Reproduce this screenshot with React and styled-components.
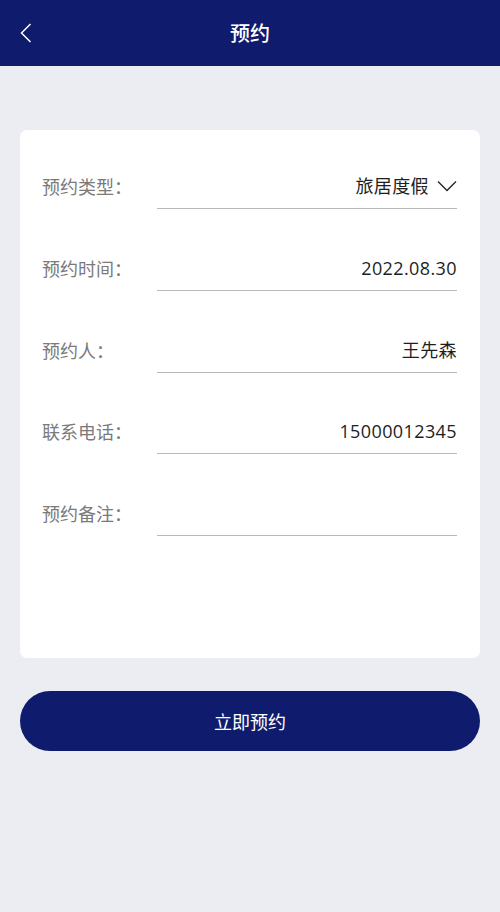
import React from 'react'
import styled, { createGlobalStyle } from 'styled-components'

const GlobalStyle = createGlobalStyle`
  html, body {
    margin: 0;
    padding: 0;
    background: #ecedf2;
    font-family: "Noto Sans CJK SC", "Noto Sans", sans-serif;
  }
`

const Page = styled.div`
  min-height: 912px;
  background: #ecedf2;
`

const Header = styled.header`
  height: 66px;
  background: #0f1c6e;
  display: flex;
  align-items: center;
  justify-content: center;
  position: relative;
  color: #fff;
`

const BackButton = styled.button`
  position: absolute;
  left: 14px;
  top: 18px;
  width: 24px;
  height: 30px;
  padding: 0;
  border: none;
  background: none;
  display: flex;
  align-items: center;
  justify-content: center;
  cursor: pointer;
`

const Title = styled.h1`
  margin: 0;
  font-size: 20px;
  font-weight: 500;
  line-height: 28px;
`

const Content = styled.main`
  padding: 64px 20px 0;
  display: flex;
  flex-direction: column;
  gap: 33px;
`

const Card = styled.section`
  background: #fff;
  border-radius: 7px;
  padding: 44px 23px 122px 22px;
  display: flex;
  flex-direction: column;
  gap: 46.75px;
`

const Row = styled.div`
  display: flex;
  align-items: flex-end;
`

const Label = styled.span`
  width: 115px;
  flex-shrink: 0;
  font-size: 18px;
  line-height: 24px;
  color: #7a7a7a;
  padding-bottom: 11px;
`

const Field = styled.div`
  flex: 1;
  display: flex;
  align-items: center;
  justify-content: flex-end;
  gap: 8px;
  height: 24px;
  padding-bottom: 10px;
  border-bottom: 1px solid #b8b8b8;
  font-family: "Open Sans", "Noto Sans CJK SC", sans-serif;
  font-size: 18px;
  letter-spacing: 0.4px;
  line-height: 24px;
  color: #1e1e1e;
`

const SubmitButton = styled.button`
  height: 60px;
  border: none;
  border-radius: 30px;
  background: #0f1c6e;
  color: #fff;
  font-family: inherit;
  font-size: 18px;
  cursor: pointer;
`

const ChevronDown = () => (
  <svg width="20" height="12" viewBox="0 0 20 12" fill="none">
    <path d="M1 1.5 L10 10.5 L19 1.5" stroke="#222" strokeWidth="1.3" />
  </svg>
)

const ChevronLeft = () => (
  <svg width="12" height="20" viewBox="0 0 12 20" fill="none">
    <path d="M10.5 1 L1.5 10 L10.5 19" stroke="#fff" strokeWidth="1.5" />
  </svg>
)

const fields = [
  { label: '预约类型：', value: '旅居度假', select: true },
  { label: '预约时间：', value: '2022.08.30' },
  { label: '预约人：', value: '王先森' },
  { label: '联系电话：', value: '15000012345' },
  { label: '预约备注：', value: '' },
]

export default function App() {
  return (
    <Page>
      <GlobalStyle />
      <Header>
        <BackButton aria-label="返回">
          <ChevronLeft />
        </BackButton>
        <Title>预约</Title>
      </Header>
      <Content>
        <Card>
          {fields.map(f => (
            <Row key={f.label}>
              <Label>{f.label}</Label>
              <Field>
                {f.value}
                {f.select && <ChevronDown />}
              </Field>
            </Row>
          ))}
        </Card>
        <SubmitButton>立即预约</SubmitButton>
      </Content>
    </Page>
  )
}
